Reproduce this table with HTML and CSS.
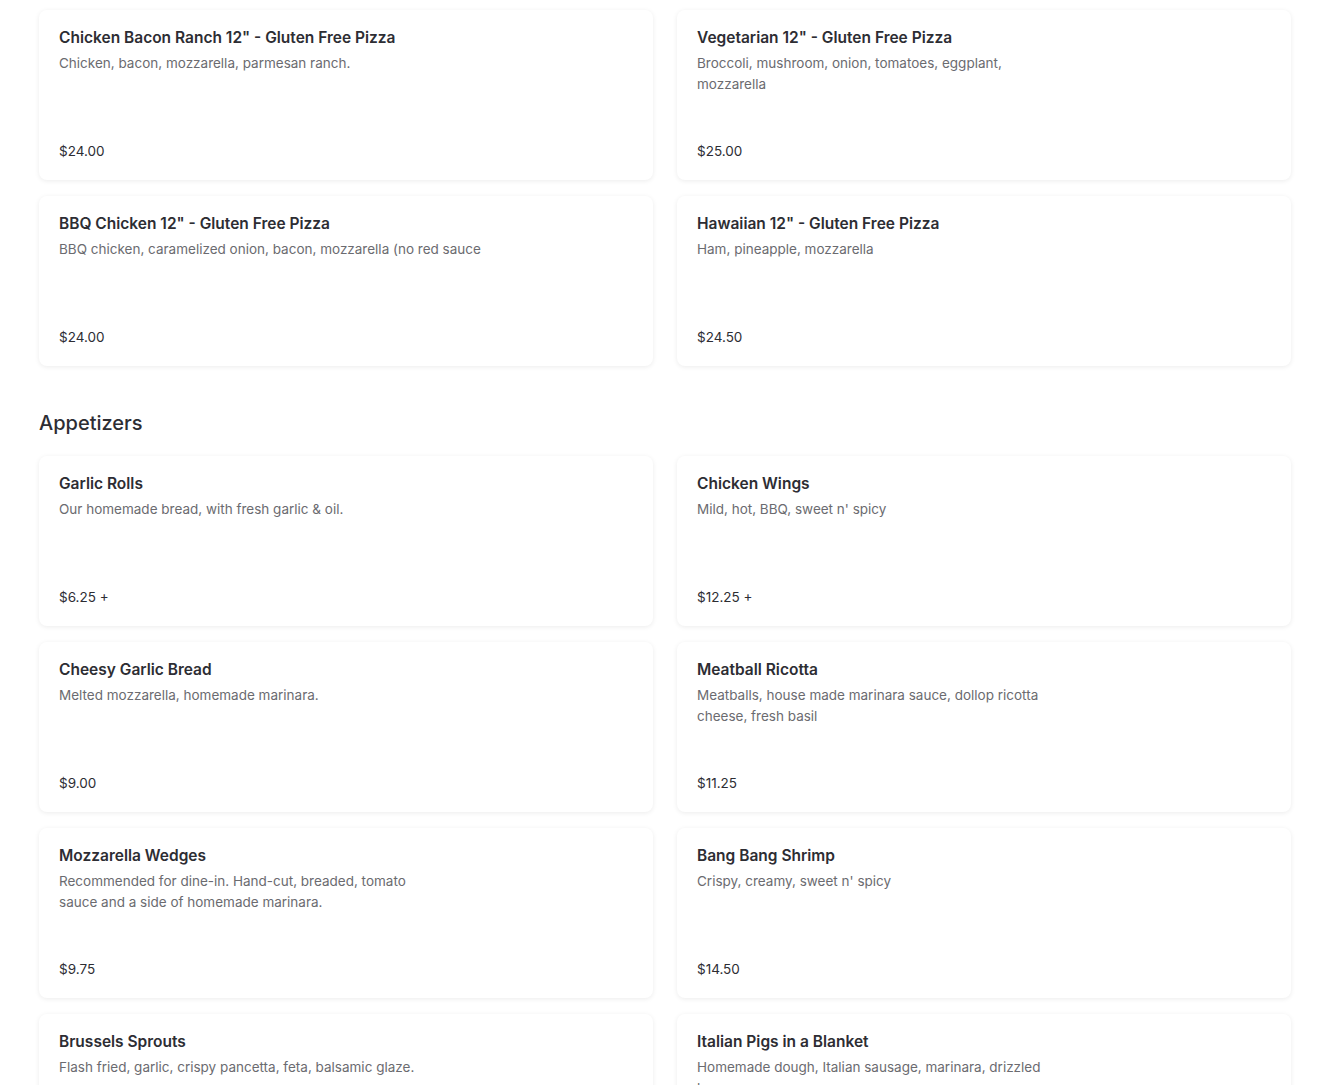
FILE: index.html
```html
<!DOCTYPE html>
<html lang="en">
<head>
    <meta charset="UTF-8">
    <meta name="viewport" content="width=device-width, initial-scale=1.0">
    <title>Menu</title>
    <link rel="stylesheet" href="styles.css">
</head>
<body>
    <div class="menu">
        <section class="menu-section">
            <div class="item-grid">
                <div class="item-card">
                    <h3 class="item-name">Chicken Bacon Ranch 12" - Gluten Free Pizza</h3>
                    <p class="item-desc">Chicken, bacon, mozzarella, parmesan ranch.</p>
                    <span class="item-price">$24.00</span>
                </div>
                <div class="item-card">
                    <h3 class="item-name">Vegetarian 12" - Gluten Free Pizza</h3>
                    <p class="item-desc">Broccoli, mushroom, onion, tomatoes, eggplant, mozzarella</p>
                    <span class="item-price">$25.00</span>
                </div>
                <div class="item-card">
                    <h3 class="item-name">BBQ Chicken 12" - Gluten Free Pizza</h3>
                    <p class="item-desc single-line">BBQ chicken, caramelized onion, bacon, mozzarella (no red sauce</p>
                    <span class="item-price">$24.00</span>
                </div>
                <div class="item-card">
                    <h3 class="item-name">Hawaiian 12" - Gluten Free Pizza</h3>
                    <p class="item-desc">Ham, pineapple, mozzarella</p>
                    <span class="item-price">$24.50</span>
                </div>
            </div>
        </section>

        <section class="menu-section">
            <h2 class="section-title">Appetizers</h2>
            <div class="item-grid">
                <div class="item-card">
                    <h3 class="item-name">Garlic Rolls</h3>
                    <p class="item-desc">Our homemade bread, with fresh garlic &amp; oil.</p>
                    <span class="item-price">$6.25 +</span>
                </div>
                <div class="item-card">
                    <h3 class="item-name">Chicken Wings</h3>
                    <p class="item-desc">Mild, hot, BBQ, sweet n' spicy</p>
                    <span class="item-price">$12.25 +</span>
                </div>
                <div class="item-card">
                    <h3 class="item-name">Cheesy Garlic Bread</h3>
                    <p class="item-desc">Melted mozzarella, homemade marinara.</p>
                    <span class="item-price">$9.00</span>
                </div>
                <div class="item-card">
                    <h3 class="item-name">Meatball Ricotta</h3>
                    <p class="item-desc">Meatballs, house made marinara sauce, dollop ricotta cheese, fresh basil</p>
                    <span class="item-price">$11.25</span>
                </div>
                <div class="item-card">
                    <h3 class="item-name">Mozzarella Wedges</h3>
                    <p class="item-desc">Recommended for dine-in. Hand-cut, breaded, tomato sauce and a side of homemade marinara.</p>
                    <span class="item-price">$9.75</span>
                </div>
                <div class="item-card">
                    <h3 class="item-name">Bang Bang Shrimp</h3>
                    <p class="item-desc">Crispy, creamy, sweet n' spicy</p>
                    <span class="item-price">$14.50</span>
                </div>
                <div class="item-card">
                    <h3 class="item-name">Brussels Sprouts</h3>
                    <p class="item-desc">Flash fried, garlic, crispy pancetta, feta, balsamic glaze.</p>
                    <span class="item-price">$10.50</span>
                </div>
                <div class="item-card">
                    <h3 class="item-name">Italian Pigs in a Blanket</h3>
                    <p class="item-desc">Homemade dough, Italian sausage, marinara, drizzled honey</p>
                    <span class="item-price">$12.00</span>
                </div>
            </div>
        </section>
    </div>
</body>
</html>
```

FILE: styles.css
```css
body {
    margin: 0;
    background-color: #fff;
    font-family: Inter, "Noto Sans", Arial, sans-serif;
    color: #2d2d33;
}
.menu {
    padding: 10px 39px 40px;
}
.menu-section + .menu-section {
    margin-top: 43px;
}
.section-title {
    margin: 0 0 19px;
    font-size: 20px;
    line-height: 28px;
    font-weight: 500;
    color: #2d2d33;
}
.item-grid {
    display: grid;
    grid-template-columns: 1fr 1fr;
    column-gap: 24px;
    row-gap: 16px;
}
.item-card {
    display: flex;
    flex-direction: column;
    height: 170px;
    box-sizing: border-box;
    padding: 17px 20px 19px;
    background-color: #fff;
    border-radius: 8px;
    box-shadow: 0 1px 5px rgba(0, 0, 0, 0.08);
}
.item-name {
    margin: 0;
    font-size: 15.5px;
    line-height: 22px;
    font-weight: 600;
    color: #2d2d33;
}
.item-desc {
    margin: 4px 0 0;
    max-width: 360px;
    font-size: 13.5px;
    line-height: 21px;
    color: #6b6b70;
}
.item-desc.single-line {
    max-width: none;
    white-space: nowrap;
}
.item-price {
    margin-top: auto;
    font-size: 13.5px;
    line-height: 20px;
    color: #2d2d33;
}
```
